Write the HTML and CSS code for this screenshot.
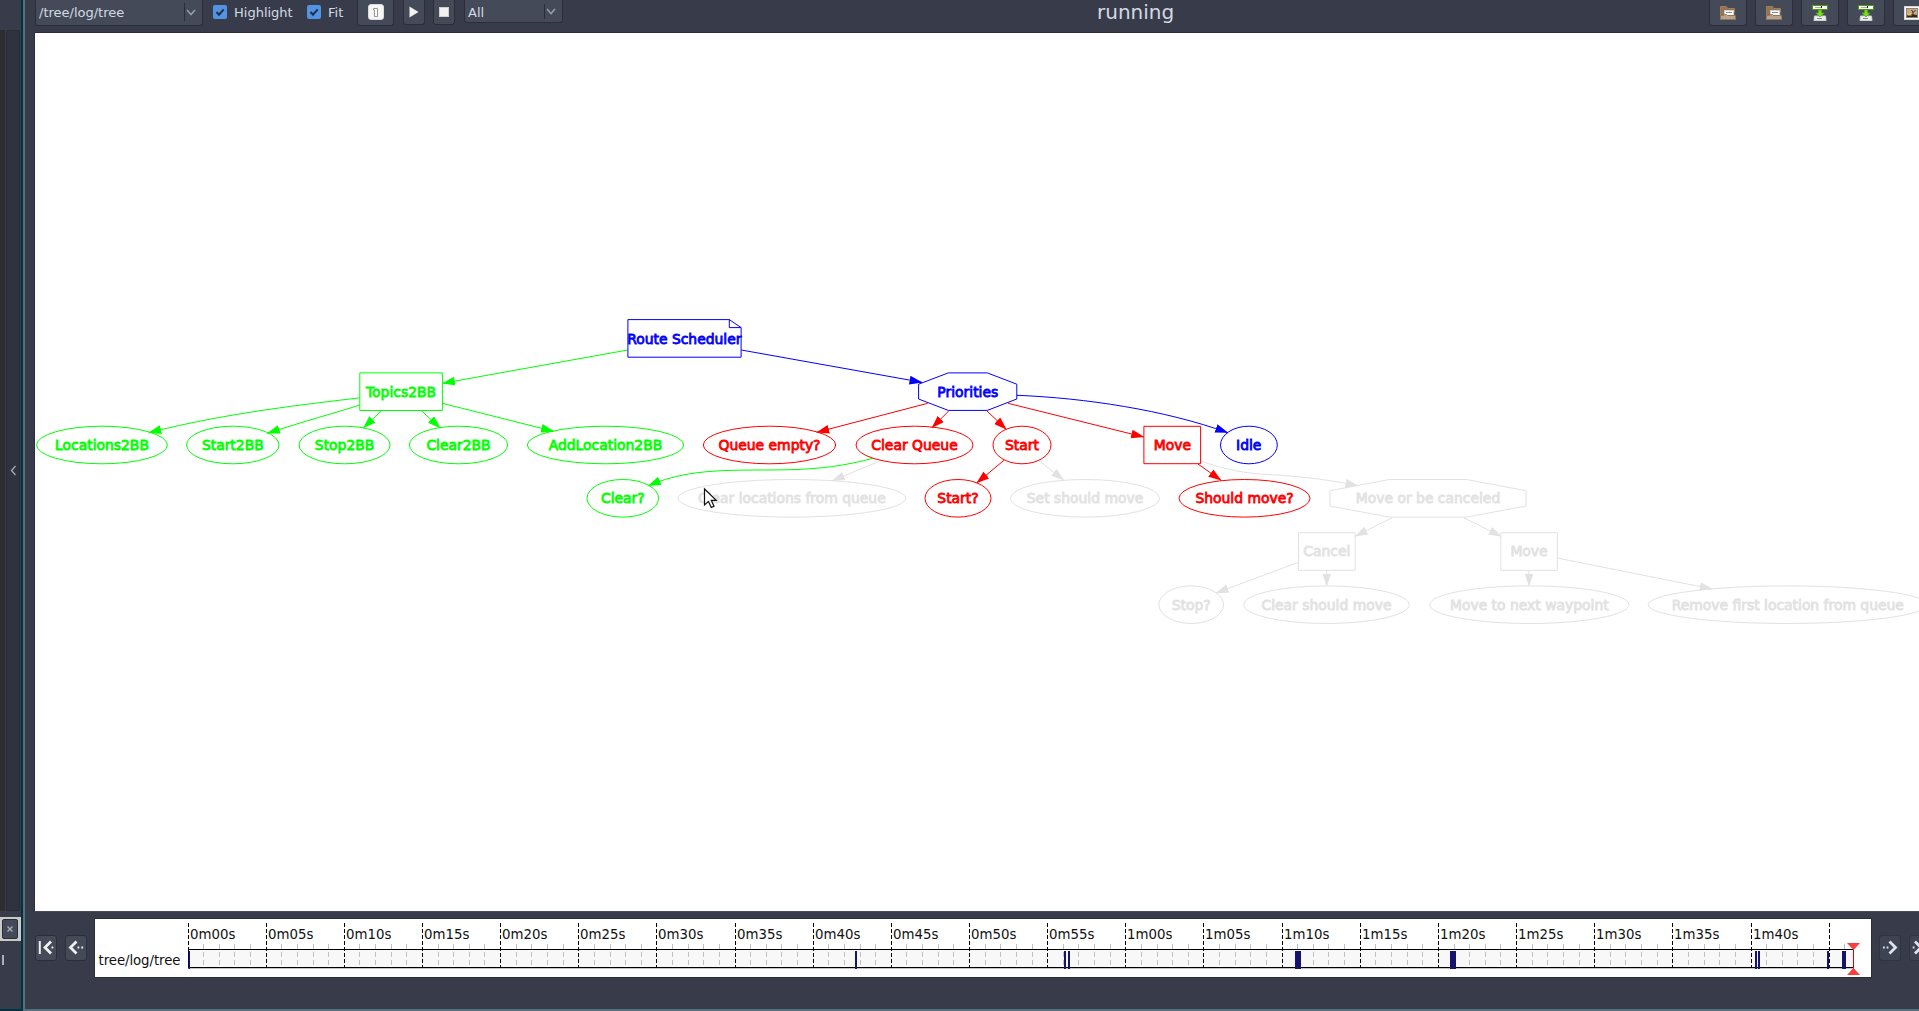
FILE: index.html
```html
<!DOCTYPE html>
<html lang="en">
<head>
<meta charset="utf-8">
<title>Behavior tree viewer</title>
<link rel="stylesheet" href="styles.css">
</head>
<body>
<div class="app">
  <aside class="side">
    <div class="side-top"></div>
    <div class="side-mid">
      <div class="side-strip"></div>
      <div class="side-handle"><svg width="7" height="11" viewBox="0 0 7 11"><path d="M5.5 1 1.5 5.5l4 4.500" fill="none" stroke="#a6aab3" stroke-width="1.300"/></svg></div>
    </div>
    <div class="side-close"><span class="close-btn"><svg width="8" height="8" viewBox="0 0 8 8"><path d="M1.500 1.500l5 5M6.500 1.500l-5 5" stroke="#a9aeb5" stroke-width="1.400"/></svg></span></div>
    <div class="side-foot"></div>
  </aside>
  <main class="main">
    <header class="toolbar">
      <div class="combo combo-topic"><span>/tree/log/tree</span><i><svg width="10" height="7" viewBox="0 0 10 7"><path d="M1 1l4 4.500L9 1" class="chev"/></svg></i></div>
      <label class="check check-hl"><b><svg width="10" height="10" viewBox="0 0 10 10"><path d="M1.500 5l2.500 2.700L8.700 2.300" class="tick"/></svg></b>Highlight</label>
      <label class="check check-fit"><b><svg width="10" height="10" viewBox="0 0 10 10"><path d="M1.500 5l2.500 2.700L8.700 2.300" class="tick"/></svg></b>Fit</label>
      <div class="btn btn-one"><svg width="16" height="16" viewBox="0 0 16 16"><rect x=".5" y=".5" width="15" height="15" rx="2.500" fill="#f6f6f6" stroke="#dcdcdc"/><path d="M5.500 6V4.500H9.500v8h-3V6z" fill="#fff" stroke="#8d8d8d" stroke-width=".9"/></svg></div>
      <div class="btn btn-play"><svg width="10" height="12" viewBox="0 0 10 12"><path d="M.5.5 9.500 6 .5 11.500z" fill="#f2f2f0"/></svg></div>
      <div class="btn btn-stop"><svg width="10" height="10" viewBox="0 0 10 10"><rect x=".5" y=".5" width="9" height="9" fill="#f2f2f0" stroke="#d0d0cc"/></svg></div>
      <div class="combo combo-all"><span>All</span><i><svg width="10" height="7" viewBox="0 0 10 7"><path d="M1 1l4 4.500L9 1" class="chev"/></svg></i></div>
      <div class="state">running</div>
      <div class="actions">
        <div class="btn"><svg width="16" height="16" viewBox="0 0 16 16"><use href="#folder"/></svg></div>
        <div class="btn"><svg width="16" height="16" viewBox="0 0 16 16"><use href="#folder"/></svg></div>
        <div class="btn"><svg width="16" height="16" viewBox="0 0 16 16"><use href="#save"/></svg></div>
        <div class="btn"><svg width="16" height="16" viewBox="0 0 16 16"><use href="#save"/></svg></div>
        <div class="btn"><svg width="16" height="16" viewBox="0 0 16 16"><rect x=".5" y="1.500" width="15" height="13" fill="#fafafa" stroke="#d8d8d8"/><rect x="2.500" y="3.500" width="11" height="9" fill="#c9aa87" stroke="#8d8378"/><path d="M3 12v-2l4-1 6 1v2z" fill="#2e2a1e"/><path d="M3.500 8.500h4v2h-4z" fill="#f0c060"/><path d="M9 10V7L7.500 5M9 7.500 11.500 5" stroke="#3a3128" fill="none"/></svg></div>
      </div>
    </header>

    <section class="canvas">
      <svg class="graph" width="1884" height="878" viewBox="35 33 1884 878">
        <defs>
          <marker id="ag" markerUnits="userSpaceOnUse" markerWidth="13" markerHeight="10" refX="12.500" refY="5" orient="auto"><path d="M0 .6v8.800L13 5z"/></marker>
          <marker id="ar" markerUnits="userSpaceOnUse" markerWidth="13" markerHeight="10" refX="12.500" refY="5" orient="auto"><path d="M0 .6v8.800L13 5z"/></marker>
          <marker id="ab" markerUnits="userSpaceOnUse" markerWidth="13" markerHeight="10" refX="12.500" refY="5" orient="auto"><path d="M0 .6v8.800L13 5z"/></marker>
          <marker id="al" markerUnits="userSpaceOnUse" markerWidth="13" markerHeight="10" refX="12.500" refY="5" orient="auto"><path d="M0 .6v8.800L13 5z"/></marker>
        </defs>

        <g class="idle">
          <path class="edge" d="M879.3 461.300 832.300 480.700"/>
          <path class="edge" d="M1039.300 461 1063.700 480"/>
          <path class="edge" d="M1201 461C1220 468 1240 472.500 1260 474C1295 476 1320 478 1358 485.700"/>
          <path class="edge" d="M1391.900 517.700 1355.100 536.300"/>
          <path class="edge" d="M1463.900 517.700 1501.200 536.300"/>
          <path class="edge" d="M1298.500 562.300 1216 593"/>
          <path class="edge" d="M1326.700 570.500V586"/>
          <path class="edge" d="M1529 570.500V586"/>
          <path class="edge" d="M1557.300 558 1712.300 589"/>
          <ellipse cx="791.800" cy="498.300" rx="113.800" ry="18.800"/><text x="791.800" y="503.300">Clear locations from queue</text>
          <ellipse cx="1085" cy="498.300" rx="74.600" ry="18.800"/><text x="1085" y="503.300">Set should move</text>
          <path d="M1389.400 479.500H1466.400L1526 490.700V506L1466.400 517.100H1389.400L1330 506V490.700z"/><text x="1428" y="503.300">Move or be canceled</text>
          <path d="M1298.500 532.700h56.700v37.600h-56.700z"/><text x="1326.800" y="556">Cancel</text>
          <path d="M1500.700 532.700h56.700v37.600h-56.700z"/><text x="1529" y="556">Move</text>
          <ellipse cx="1191.200" cy="604.700" rx="32.300" ry="18.800"/><text x="1191.200" y="609.700">Stop?</text>
          <ellipse cx="1326.500" cy="604.700" rx="82.700" ry="18.800"/><text x="1326.500" y="609.700">Clear should move</text>
          <ellipse cx="1529.300" cy="604.700" rx="99.600" ry="18.800"/><text x="1529.300" y="609.700">Move to next waypoint</text>
          <ellipse cx="1787.800" cy="604.700" rx="139.600" ry="18.800"/><text x="1787.800" y="609.700">Remove first location from queue</text>
        </g>

        <g class="success">
          <path class="edge" d="M627.700 350 442.400 383.300"/>
          <path class="edge" d="M359.800 397.800C310 404 230 412 148.700 432.700"/>
          <path class="edge" d="M359.800 405C335 413 305 421 267.400 433.300"/>
          <path class="edge" d="M381.300 410.700 363.400 428"/>
          <path class="edge" d="M421.400 410.700 440.200 428"/>
          <path class="edge" d="M442.400 403.300 553.600 431.300"/>
          <path class="edge" d="M872.700 458.300C845 466 818 469 790 469.700C755 470.500 725 469 695 473C678 475.500 664 479 648.300 485.700"/>
          <path d="M359.800 372.900h82.600v37.600h-82.600z"/><text x="401" y="396.600">Topics2BB</text>
          <ellipse cx="102" cy="445" rx="65.400" ry="18.800"/><text x="102" y="450">Locations2BB</text>
          <ellipse cx="232.800" cy="445" rx="46.200" ry="18.800"/><text x="232.800" y="450">Start2BB</text>
          <ellipse cx="344.600" cy="445" rx="45.500" ry="18.800"/><text x="344.600" y="450">Stop2BB</text>
          <ellipse cx="458.500" cy="445" rx="49.100" ry="18.800"/><text x="458.500" y="450">Clear2BB</text>
          <ellipse cx="605.500" cy="445" rx="78.200" ry="18.800"/><text x="605.500" y="450">AddLocation2BB</text>
          <ellipse cx="622.800" cy="498.300" rx="35.800" ry="18.800"/><text x="622.800" y="503.300">Clear?</text>
        </g>

        <g class="failure">
          <path class="edge" d="M927.700 403.300 816.700 432.300"/>
          <path class="edge" d="M948.700 411 932 427.700"/>
          <path class="edge" d="M987 411 1006.300 429.300"/>
          <path class="edge" d="M1008 403.300 1143.700 437"/>
          <path class="edge" d="M1004.300 460 976.700 483"/>
          <path class="edge" d="M1198 464 1221 480.300"/>
          <ellipse cx="769.500" cy="445" rx="66.200" ry="18.800"/><text x="769.500" y="450">Queue empty?</text>
          <ellipse cx="914.500" cy="445" rx="58.500" ry="18.800"/><text x="914.500" y="450">Clear Queue</text>
          <ellipse cx="1022" cy="445" rx="29" ry="18.800"/><text x="1022" y="450">Start</text>
          <path d="M1143.900 426.300h56.700v37.400h-56.700z"/><text x="1172.300" y="450">Move</text>
          <ellipse cx="958" cy="498.300" rx="33" ry="18.800"/><text x="958" y="503.300">Start?</text>
          <ellipse cx="1244.500" cy="498.300" rx="65.500" ry="18.800"/><text x="1244.500" y="503.300">Should move?</text>
        </g>

        <g class="running">
          <path class="edge" d="M741.300 350 922 382.300"/>
          <path class="edge" d="M1017 395.300C1085 398 1165 410 1227.700 432.700"/>
          <path d="M627.900 319.600H729.300L741.100 327.600V357.200H627.900zM729.300 319.600V327.600H741.100"/><text x="684.300" y="343.500">Route Scheduler</text>
          <path d="M948.300 372.900H987.300L1016.800 384.200V399L987.300 410.400H948.300L918.600 399V384.200z"/><text x="967.800" y="396.600">Priorities</text>
          <ellipse cx="1248.900" cy="445" rx="28.400" ry="18.800"/><text x="1248.700" y="450">Idle</text>
        </g>
        <path class="cursor" d="M704.500 489v16l4-3.600 2.800 6 2.700-1.200-2.700-5.900h5z"/>
      </svg>
    </section>

    <footer class="player">
      <div class="btn nav"><svg width="16" height="16" viewBox="0 0 16 16"><path d="M1.800 1v13" class="arrow thin"/><path d="M13 1.500 7 7.500l6 6" class="arrow"/><path d="M13.500 7.500h1.800" class="arrow thin"/></svg></div>
      <div class="btn nav"><svg width="16" height="16" viewBox="0 0 16 16"><path d="M8.500 1.500 2.500 7.500l6 6" class="arrow"/><path d="M9.500 7.500h1.800M13.300 7.500h1.800" class="arrow thin"/></svg></div>
      <svg class="timeline" width="1776" height="58" viewBox="95 919 1776 58">
        <rect x="188" y="949" width="1665" height="19" fill="#f8f8f8"/>
        <g id="ticks"></g>
        <path d="M188 968.500H1853" stroke="#c4c4c4"/>
        <path d="M188 949.500H1853M188 967.500H1853M188.500 949V968" stroke="#000"/>
        <g fill="#14146e"><rect x="188.500" y="951" width="1.500" height="18"/><rect x="855" y="951" width="2" height="18"/><rect x="1064" y="951" width="2" height="18"/><rect x="1068" y="951" width="2" height="18"/><rect x="1295" y="951" width="6" height="18"/><rect x="1450" y="951" width="6" height="18"/><rect x="1755" y="951" width="2" height="18"/><rect x="1758" y="951" width="2" height="18"/><rect x="1827" y="951" width="2" height="18"/><rect x="1842" y="951" width="4" height="18"/></g>
        <path d="M1853.500 949v20" stroke="#d00"/>
        <path d="M1847 943h13l-6.500 7zM1847 975h13l-6.500-7z" fill="#ff3c3c"/>
        <text x="98.500" y="965" textLength="82">tree/log/tree</text>
      </svg>
      <div class="btn nav next dim"><svg width="16" height="16" viewBox="0 0 16 16"><path d="M7.500 1.500l6 6-6 6" class="arrow"/><path d="M1 7.500h1.800M4.600 7.500h1.800" class="arrow thin"/></svg></div>
      <div class="btn nav dim"><svg width="16" height="16" viewBox="0 0 16 16"><path d="M3 1.500l6 6-6 6" class="arrow"/><path d="M14.200 1v13M.7 7.500h1.800" class="arrow thin"/></svg></div>
    </footer>
  </main>
</div>
<svg width="0" height="0" class="defs">
  <symbol id="folder" viewBox="0 0 16 16"><path d="M.5 1.500h6l1 2h7v4h-1l2 7H.5z" fill="#8f755c" stroke="#a87a4c"/><path d="M4.500 5.500h9v5h-9z" fill="#fff" stroke="#d0d0d0"/><path d="M6 7.500h6" stroke="#888"/><path d="M.5 10.500h3l1-1h2l1 1h8v4H.5z" fill="#b5a491" stroke="#96744f"/></symbol>
  <symbol id="save" viewBox="0 0 16 16"><path d="M.5.5h15v4H.5z" fill="#fff" stroke="#4e9a06"/><path d="M3 2.500h7" stroke="#aaa"/><path d="M9.500 1v2" stroke="#222"/><path d="M2.500 11h11l.5 4.500H2z" fill="#eee" stroke="#d0d0d0"/><path d="M5 13.500h5" stroke="#888"/><path d="M6.500 5h3v3H12l-4 4-4-4h2.500z" fill="#73e216" stroke="#4fae0b" stroke-width=".7"/></symbol>
</svg>
<script src="ticks.js"></script>
</body>
</html>
```
FILE: styles.css
```css
* { box-sizing: border-box; }
body { margin: 0; background: #383c4a; color: #d3dae3; font: 13px "DejaVu Sans", sans-serif; overflow: hidden; }
svg { display: block; flex: none; }
.defs { position: absolute; }
.app { display: flex; width: 1919px; height: 1011px; overflow: hidden; }

.side { width: 23px; flex: none; display: flex; flex-direction: column; border-right: 2px solid #04333f; border-bottom: 2px solid #04333f; }
.side-top { height: 30px; }
.side-mid { height: 881px; display: flex; gap: 1px; }
.side-strip { width: 5px; background: #2d2d2d; }
.side-handle { width: 14px; display: flex; align-items: center; justify-content: center; background: #2f323f; border: 1px solid #282b35; border-radius: 2px; }
.side-close { margin-top: 6px; height: 24px; padding: 2px; background: #c9c9c7; }
.close-btn { display: flex; width: 16px; height: 20px; align-items: center; justify-content: center; background: #444a58; border: 1px solid #2b2e39; border-radius: 2px; }
.side-foot { margin: 14px 0 0 2px; width: 2px; height: 10px; background: #aab0ba; }

.main { flex: 1; min-width: 0; display: flex; flex-direction: column; border-left: 2px solid #54707a; border-bottom: 2px solid #54707a; }
.toolbar { height: 32px; display: flex; align-items: flex-start; padding-left: 10px; }
.btn, .combo { background: #444a58; border: 1px solid #2b2e39; border-radius: 3px; }
.toolbar .btn, .toolbar .combo { border-top: 0; border-radius: 0 0 3px 3px; height: 26px; }
.combo { display: flex; justify-content: space-between; padding-left: 3px; line-height: 25px; }
.combo i { width: 18px; height: 18px; margin-top: 3px; padding-left: 1px; border-left: 1px solid #2b2e39; display: flex; align-items: center; }
.chev { fill: none; stroke: #9a9fa8; stroke-width: 1.500; }
.combo-topic { width: 168px; }
.toolbar .combo-all { width: 99px; height: 23px; margin-left: 9px; line-height: 25px; }
.toolbar .combo-all i { margin-top: 4px; height: 15px; }
.check { display: flex; align-items: center; height: 24px; gap: 7px; }
.check b { width: 14px; height: 14px; border-radius: 2px; background: #5294e2; display: flex; align-items: center; justify-content: center; }
.tick { fill: none; stroke: #20304a; stroke-width: 2; }
.check-hl { width: 94px; margin-left: 10px; }
.check-fit { width: 50px; }
.btn { display: flex; align-items: center; justify-content: center; }
.btn-one { width: 37px; padding-bottom: 1px; }
.toolbar .btn-play, .toolbar .btn-stop { width: 22px; height: 25px; padding-bottom: 1px; }
.btn-play { margin-left: 9px; }
.btn-stop { margin-left: 8px; }
.state { width: 80px; margin-left: 534px; font-size: 20px; line-height: 25px; }
.actions { margin-left: auto; display: flex; gap: 8px; width: 210px; overflow: hidden; flex: none; }
.actions .btn { width: 38px; flex: none; }

.canvas { height: 880px; margin-left: 9px; border: 1px solid #2b2e39; border-bottom-color: #454c60; border-right: 0; background: #fff; overflow: hidden; }
.graph text { font-size: 13.900px; text-anchor: middle; stroke-width: .8px; }
.graph ellipse, .graph path { fill: none; stroke-width: 1px; }
.graph marker path { stroke: none; }
.graph #ag path { fill: #0f0; }
.graph #ar path { fill: #f00; }
.graph #ab path { fill: #00f; }
.graph #al path { fill: #e2e2e2; }
.success { stroke: #0f0; }
.failure { stroke: #f00; }
.running { stroke: #00f; }
.idle { stroke: #e2e2e2; }
.success text { fill: #0f0; }
.failure text { fill: #f00; }
.running text { fill: #00f; }
.idle text { fill: #e2e2e2; }
.success .edge { marker-end: url(#ag); }
.failure .edge { marker-end: url(#ar); }
.running .edge { marker-end: url(#ab); }
.idle .edge { marker-end: url(#al); }
.graph .cursor { fill: #fff; stroke: #111; stroke-width: 1.200px; }

.player { display: flex; align-items: flex-start; padding: 7px 0 0 10px; }
.nav { flex: none; width: 22px; height: 26px; margin: 16px 8px 0 0; }
.nav.next { margin-left: 8px; }
.dim { background: #3e4353; border-color: #30343f; }
.arrow { fill: none; stroke: #f0f0ee; stroke-width: 2.800; }
.arrow.thin { stroke-width: 2; }
.dim .arrow { stroke: #dfe2ee; }
.timeline { background: #fff; outline: 1px solid #2b2e39; }
.timeline text { font-size: 13.330px; fill: #111; }
.major { stroke: #000; stroke-dasharray: 4 2; }
.minor { stroke: #c0c0c0; stroke-dasharray: 5 3; }
```
FILE: ticks.js
```js
// One tick per second; a dashed line and a label every five seconds.
const group = document.getElementById('ticks');
const NS = 'http://www.w3.org/2000/svg';
for (let s = 0; s <= 106; s++) {
  const x = Math.floor(188 + s * 15.63) + 0.5;
  const line = document.createElementNS(NS, 'path');
  const major = s % 5 === 0;
  line.setAttribute('class', major ? 'major' : 'minor');
  line.setAttribute('d', major ? `M${x} 923V967` : `M${x} 944V965`);
  group.appendChild(line);
  if (major && s < 105) {
    const t = document.createElementNS(NS, 'text');
    t.setAttribute('x', x + 1.5);
    t.setAttribute('y', 938.5);
    t.textContent = Math.floor(s / 60) + 'm' + String(s % 60).padStart(2, '0') + 's';
    group.appendChild(t);
  }
}
```
